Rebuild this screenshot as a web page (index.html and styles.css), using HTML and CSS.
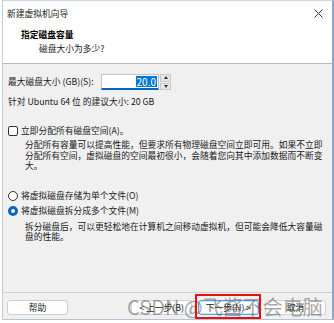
FILE: index.html
```html
<!DOCTYPE html>
<html lang="zh-CN">
<head>
    <meta charset="UTF-8">
    <meta name="viewport" content="width=device-width, initial-scale=1.0">
    <title>新建虚拟机向导</title>
    <link rel="stylesheet" href="styles.css">
</head>
<body>
    <div class="window">
        <div class="titlebar">
            <span class="title">新建虚拟机向导</span>
            <svg class="close" width="9" height="9" viewBox="0 0 9 9">
                <path d="M0.5 0.5 L8.5 8.5 M8.5 0.5 L0.5 8.5" stroke="#333" stroke-width="1" fill="none"/>
            </svg>
        </div>
        <div class="header">
            <p class="header-title">指定磁盘容量</p>
            <p class="header-sub">磁盘大小为多少?</p>
        </div>

        <div class="content">
            <div class="size-row">
                <label class="size-label">最大磁盘大小 (GB)(S):</label>
                <div class="number-input"><span class="selected">20.0</span></div>
                <div class="spinner">
                    <span class="spin-btn"><i class="tri-up"></i></span>
                    <span class="spin-btn"><i class="tri-down"></i></span>
                </div>
            </div>
            <p class="hint">针对 Ubuntu 64 位 的建议大小: 20 GB</p>

            <div class="option check-option">
                <span class="checkbox"></span>
                <span>立即分配所有磁盘空间(A)。</span>
            </div>
            <p class="desc">分配所有容量可以提高性能，但要求所有物理磁盘空间立即可用。如果不立即分配所有空间，虚拟磁盘的空间最初很小，会随着您向其中添加数据而不断变大。</p>

            <div class="option radio-first">
                <span class="radio"></span>
                <span>将虚拟磁盘存储为单个文件(O)</span>
            </div>
            <div class="option radio-second">
                <span class="radio checked"></span>
                <span>将虚拟磁盘拆分成多个文件(M)</span>
            </div>
            <p class="desc desc-split">拆分磁盘后，可以更轻松地在计算机之间移动虚拟机，但可能会降低大容量磁盘的性能。</p>
        </div>

        <div class="footer">
            <button class="btn btn-help">帮助</button>
            <div class="spacer"></div>
            <button class="btn">&lt; 上一步(B)</button>
            <button class="btn btn-focus">下一步(N) &gt;</button>
            <button class="btn">取消</button>
        </div>
    </div>

    <div class="watermark">CSDN @飞酱不会电脑</div>
    <div class="highlight"></div>
</body>
</html>
```

FILE: styles.css
```css
* {
    margin: 0;
    padding: 0;
    box-sizing: border-box;
    font-family: "Noto Sans CJK SC", "Liberation Sans", sans-serif;
}

body {
    background: #ffffff;
    width: 334px;
    height: 323px;
    overflow: hidden;
    position: relative;
    font-size: 8.75px;
    color: #1a1a1a;
}

.window {
    margin-left: 2px;
    width: 332px;
    height: 320px;
    display: flex;
    flex-direction: column;
    background: #f0f0f0;
    border-top: 1px solid #c9d6e8;
    border-left: 1px solid #c3cbd6;
    border-right: 2px solid #8ea6c6;
    border-bottom: 1px solid #b5c2d3;
}

.titlebar {
    height: 25px;
    background: #ffffff;
    display: flex;
    align-items: center;
    justify-content: space-between;
    padding: 1px 9px 0 4px;
    line-height: 10px;
}

.close {
    margin-top: -1px;
}

.header {
    height: 38px;
    background: #ffffff;
    padding: 4px 0 0 18px;
    border-bottom: 1px solid #b8b8b8;
}

.header-title {
    font-weight: bold;
    line-height: 10px;
    color: #000;
}

.header-sub {
    line-height: 10px;
    margin-top: 4px;
    padding-left: 18px;
}

.content {
    flex: 1;
    padding: 10px 0 0 5px;
}

.size-row {
    display: flex;
    align-items: center;
    height: 16px;
}

.size-label {
    width: 93px;
    line-height: 10px;
}

.number-input {
    width: 58px;
    height: 16px;
    background: #ffffff;
    border: 1px solid #c2c2c2;
    border-bottom: 2px solid #0067c0;
    display: flex;
    align-items: center;
    justify-content: flex-end;
    padding-right: 1px;
}

.selected {
    background: #0078d7;
    color: #ffffff;
    line-height: 11px;
    padding: 0 1px;
    font-size: 10px;
}

.spinner {
    margin-left: 1px;
    width: 11px;
    height: 16px;
    display: flex;
    flex-direction: column;
    gap: 1px;
}

.spin-btn {
    flex: 1;
    background: #e6e6e6;
    border: 1px solid #c8c8c8;
    display: flex;
    align-items: center;
    justify-content: center;
}

.tri-up, .tri-down {
    width: 0;
    height: 0;
    border-left: 2.5px solid transparent;
    border-right: 2.5px solid transparent;
}

.tri-up { border-bottom: 3px solid #333; }
.tri-down { border-top: 3px solid #333; }

.hint {
    margin-top: 7px;
    line-height: 10px;
}

.option {
    display: flex;
    align-items: center;
    gap: 3px;
    line-height: 10px;
}

.check-option {
    margin-top: 19px;
}

.checkbox {
    width: 10px;
    height: 10px;
    border: 1px solid #333;
    border-radius: 2px;
    background: #fff;
}

.radio {
    width: 10px;
    height: 10px;
    border: 1px solid #333;
    border-radius: 50%;
    background: #fff;
}

.radio.checked {
    border: 3px solid #0067c0;
}

.desc {
    width: 301px;
    margin: 4px 0 0 17px;
    line-height: 10.5px;
}

.radio-first {
    margin-top: 19px;
}

.radio-second {
    margin-top: 5px;
}

.desc-split {
    margin-top: 6px;
    line-height: 10px;
}

.footer {
    height: 27px;
    border-top: 1px solid #d0d0d0;
    display: flex;
    align-items: flex-start;
    padding: 7px 0 0 4px;
}

.btn {
    width: 61px;
    height: 15px;
    background: #fdfdfd;
    border: 1px solid #d0d0d0;
    border-radius: 3px;
    font-size: 8.75px;
    line-height: 12px;
    color: #1a1a1a;
    margin-right: 6px;
}

.spacer {
    flex: 1;
}

.btn-focus {
    border: 1px solid #5aa0dc;
    box-shadow: inset 0 0 0 1px #cfe4f7;
}

.watermark {
    position: absolute;
    left: 127px;
    top: 294px;
    font-size: 20px;
    line-height: 25px;
    color: rgba(95, 95, 95, 0.55);
    white-space: nowrap;
}

.highlight {
    position: absolute;
    left: 195px;
    top: 294px;
    width: 66px;
    height: 25px;
    border: 2px solid #e81010;
}
```
